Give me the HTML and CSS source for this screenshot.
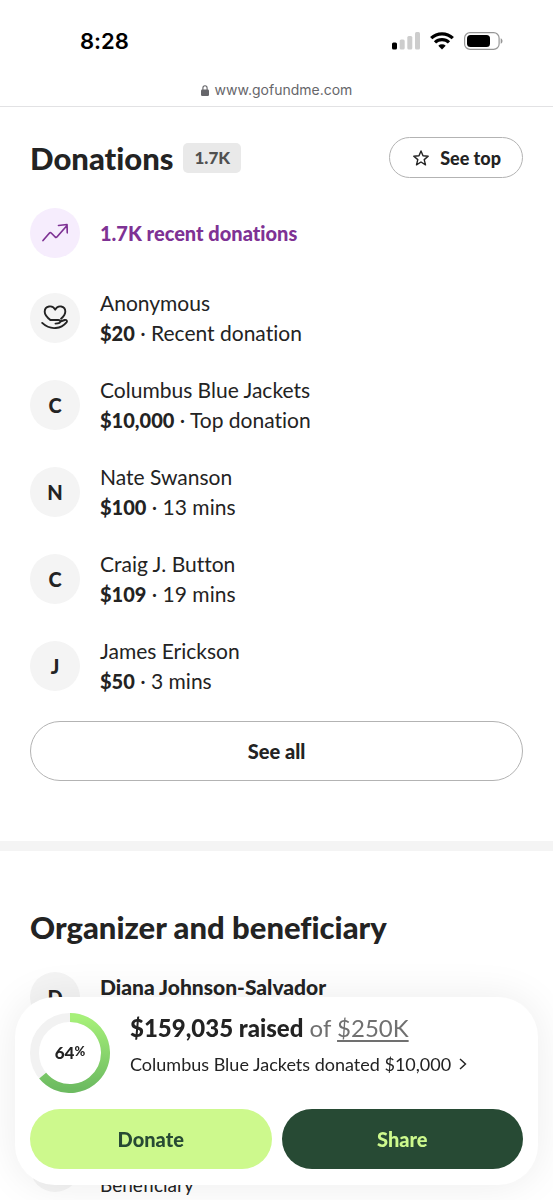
FILE: index.html
```html
<!DOCTYPE html>
<html lang="en">
<head>
<meta charset="utf-8">
<meta name="viewport" content="width=device-width, initial-scale=1">
<title>Donations</title>
<link rel="stylesheet" href="styles.css">
</head>
<body>
<header class="chrome">
  <div class="status">
    <time class="clock">8:28</time>
    <div class="indicators">
      <svg width="28" height="18" viewBox="0 0 28 18" aria-hidden="true"><rect x="0" y="10.500" width="5" height="7" rx="1.500" fill="#000"/><g fill="#cdcdcd"><rect x="7.700" y="7.500" width="5" height="10" rx="1.500"/><rect x="15.300" y="4" width="5" height="13.500" rx="1.500"/><rect x="23" y="0" width="5" height="17.500" rx="1.500"/></g></svg>
      <svg width="24" height="18" viewBox="0 0 24 18" aria-hidden="true"><g fill="none" stroke="#000" stroke-width="3.200"><path d="M1.200 6.200a15.500 15.500 0 0 1 21.600 0"/><path d="M5 10.400a10 10 0 0 1 14 0"/></g><path d="M12 17.500l-3.700-3.700a5.400 5.400 0 0 1 7.400 0z"/></svg>
      <svg width="39" height="18" viewBox="0 0 39 18" aria-hidden="true"><rect x=".6" y=".6" width="34.500" height="16.800" rx="5.500" fill="none" stroke="#969696" stroke-width="1.200"/><rect x="3" y="3" width="23" height="12" rx="3.500"/><path d="M36.700 6.200c2.400 1 2.400 4.600 0 5.600z" fill="#969696"/></svg>
    </div>
  </div>
  <div class="address">
    <svg width="8" height="11" viewBox="0 0 8 11" aria-hidden="true"><rect x="0" y="4.500" width="8" height="6.500" rx="1.200" fill="#66666a"/><path d="M1.900 5V3a2.100 2.300 0 0 1 4.200 0v2" fill="none" stroke="#66666a" stroke-width="1.100"/></svg>
    <span>www.gofundme.com</span>
  </div>
</header>
<main>
  <section class="donations">
    <div class="section-head">
      <h2>Donations</h2>
      <span class="count">1.7K</span>
      <button class="pill see-top" type="button">
        <svg width="16" height="16" viewBox="0 0 16 16" fill="none" stroke="#232323" stroke-width="1.400" stroke-linejoin="round" aria-hidden="true"><path d="M8 1l2 4.800 5.200.4-4 3.400 1.300 5.200L8 12l-4.500 2.800 1.300-5.200-4-3.400L6 5.800z"/></svg>
        See top
      </button>
    </div>
    <div class="row recent">
      <span class="avatar trend"><svg width="26" height="20" viewBox="0 0 26 20" fill="none" stroke="#7e3294" stroke-width="1.700" stroke-linecap="round" stroke-linejoin="round" aria-hidden="true"><path d="M1 17.500L7.500 10q.8-.9 1.700 0l4 4q.9.8 1.700 0L25 2.500M16.500 2.500L25 1.500l.3 8.300"/></svg></span>
      <strong>1.7K recent donations</strong>
    </div>
    <ul class="list">
      <li class="row"><span class="avatar"><svg width="28" height="26" viewBox="0 0 28 26" fill="none" stroke="#232323" stroke-width="1.900" stroke-linecap="round" stroke-linejoin="round" aria-hidden="true"><path d="M9.500 15C5.500 12 3.700 9.500 3.700 6.700c0-6 8-7.200 10.500-2C16.700-.5 24.300.7 24.300 6.500c0 2.700-1.700 5-4.200 7.200"/><path d="M9.500 15h7.800c1.200 0 2 .7 2 1.600 0 1.600-2 2-4.800 2M19.300 16.500l4.400-1.500c1.900-.5 2.800 1 1.800 2.300-5 6-15.500 9-24.300.6"/></svg></span><p>Anonymous<br><strong>$20</strong> · Recent donation</p></li>
      <li class="row"><span class="avatar">C</span><p>Columbus Blue Jackets<br><strong>$10,000</strong> · Top donation</p></li>
      <li class="row"><span class="avatar">N</span><p>Nate Swanson<br><strong>$100</strong> · 13 mins</p></li>
      <li class="row"><span class="avatar">C</span><p>Craig J. Button<br><strong>$109</strong> · 19 mins</p></li>
      <li class="row"><span class="avatar">J</span><p>James Erickson<br><strong>$50</strong> · 3 mins</p></li>
    </ul>
    <button class="pill see-all" type="button">See all</button>
  </section>
  <section class="organizer">
    <h2>Organizer and beneficiary</h2>
    <div class="row person"><span class="avatar">D</span><strong>Diana Johnson-Salvador</strong></div>
    <div class="row beneficiary"><span class="avatar"></span><p>Beneficiary</p></div>
  </section>
</main>
<aside class="card">
  <div class="summary">
    <div class="progress">
      <svg class="ring" viewBox="0 0 80 80" aria-hidden="true">
        <defs><linearGradient id="progress-fill" x1="0" y1="0" x2="0" y2="1"><stop offset="0" stop-color="#a6f079"/><stop offset="1" stop-color="#6dbb61"/></linearGradient></defs>
        <circle cx="40" cy="40" r="35.500" fill="none" stroke="#f2f2f2" stroke-width="9"/>
        <path d="M40 4.500A35.500 35.500 0 1 1 12.650 62.630" fill="none" stroke="url(#progress-fill)" stroke-width="9"/>
      </svg>
      <span class="percent">64<small>%</small></span>
    </div>
    <div class="totals">
      <p class="raised"><strong>$159,035 raised</strong> of <a href="#goal">$250K</a></p>
      <a class="latest" href="#donations">Columbus Blue Jackets donated $10,000
        <svg width="8" height="12" viewBox="0 0 8 12" fill="none" stroke="#232323" stroke-width="1.400" aria-hidden="true"><path d="M1 1l5.500 5L1 11"/></svg></a>
    </div>
  </div>
  <div class="actions">
    <button class="donate" type="button">Donate</button>
    <button class="share" type="button">Share</button>
  </div>
</aside>
</body>
</html>
```
FILE: styles.css
```css
* { box-sizing: border-box; }
body {
  margin: 0;
  background: #fff;
  color: #232323;
  font: 21px/30px Lato, "Open Sans", sans-serif;
  font-variant-ligatures: none;
}
h2, p, ul { margin: 0; padding: 0; }
ul { list-style: none; }
svg { display: block; flex: none; }
button { margin: 0; padding: 0; border: 0; color: inherit; font: inherit; font-weight: 900; cursor: pointer; }
strong { font-weight: 900; }
h2 { font-size: 31px; line-height: 40px; font-weight: 900; }

.chrome { border-bottom: 1px solid #e2e2e4; padding-bottom: 6px; font-family: Inter, sans-serif; }
.status { display: flex; justify-content: space-between; align-items: center; padding: 26px 50px 0 80px; }
.clock { color: #000; font-size: 22px; font-weight: 600; }
.indicators { display: flex; align-items: center; gap: 10px; }
.address { display: flex; justify-content: center; align-items: center; gap: 6px; margin-top: 24px; color: #66666a; font-size: 14px; line-height: 20px; }

.donations { padding: 30px 30px 60px; border-bottom: 10px solid #f4f4f4; }
.section-head { display: flex; align-items: center; gap: 10px; }
.count { padding: 0 11px; border-radius: 5px; background: #e9e9e9; color: #505050; font-size: 17px; font-weight: 900; }
.pill { border: 1px solid #b3b3b3; background: #fff; border-radius: 30px; }
.see-top { display: flex; align-items: center; gap: 11px; height: 41px; margin-left: auto; padding: 0 21px 0 23px; font-size: 18px; }
.row { display: flex; align-items: center; gap: 20px; }
.recent { margin: 30px 0; color: #7e3294; font-size: 20px; }
.avatar { display: grid; place-items: center; flex: none; width: 50px; height: 50px; border-radius: 50%; background: #f4f4f4; font-size: 20px; font-weight: 900; }
.trend { background: #f6edfd; }
.list { display: grid; gap: 27px; }
.list strong { font-size: 20px; }
.see-all { width: 100%; height: 60px; margin-top: 25px; font-size: 20px; }

.organizer { padding: 56px 30px 0; }
.person { align-items: flex-start; margin-top: 25px; }
.beneficiary { align-items: flex-start; margin-top: 120px; }
.beneficiary p { margin-top: 28px; font-size: 19px; }

.card { position: fixed; left: 15px; right: 15px; bottom: 15px; padding: 16px 15px; border-radius: 40px; background: #fff; box-shadow: 0 0 40px rgb(0 0 0 / 8%); }
.summary { display: flex; gap: 20px; }
.progress { display: grid; place-items: center; flex: none; width: 80px; height: 80px; }
.ring, .percent { grid-area: 1 / 1; }
.ring { width: 100%; }
.percent { font-size: 17px; line-height: 20px; font-weight: 900; }
.percent small { font-size: 13px; vertical-align: 3px; line-height: 1; }
.raised { color: #707070; font-size: 24px; }
.raised strong { color: #232323; }
.raised a { color: inherit; text-underline-offset: 3px; }
.latest { display: flex; align-items: center; gap: 8px; margin-top: 6px; color: #232323; font-size: 18px; text-decoration: none; }
.actions { display: grid; grid-template-columns: 1fr 1fr; gap: 10px; margin-top: 16px; }
.actions button { height: 60px; border-radius: 30px; font-size: 20px; }
.actions .donate { background: #cdf98d; color: #274a34; }
.actions .share { background: #274a34; color: #cdf98d; }
```
